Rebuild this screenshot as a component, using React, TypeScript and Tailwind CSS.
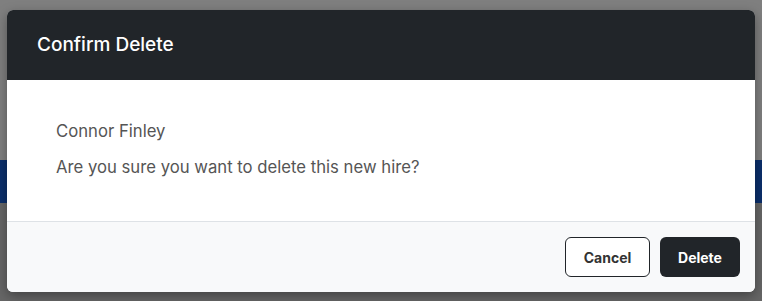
export default function App() {
  return (
    <div className="relative h-[301px] w-full overflow-hidden" style={{ fontFamily: "Inter, 'Noto Sans', sans-serif" }}>
      {/* dimmed page behind the modal */}
      <div className="flex h-full flex-col">
        <div className="h-[160px] bg-[#7f7f7f]" />
        <div className="h-[43px] bg-[#0b2f6b]" />
        <div className="flex-1 bg-[#666666]" />
      </div>

      <div className="absolute left-[7px] top-[10px] flex w-[748px] flex-col overflow-hidden rounded-md bg-white shadow-[0_4px_12px_rgba(0,0,0,0.35)]">
        <div className="flex h-[70px] items-center bg-[#212529] px-[30px]">
          <h2 className="text-[19px] font-medium text-white">Confirm Delete</h2>
        </div>
        <div className="flex h-[141px] flex-col gap-[11px] px-[49px] pt-[39px] text-[16.7px] text-[#555555]">
          <p>Connor Finley</p>
          <p>Are you sure you want to delete this new hire?</p>
        </div>
        <div className="flex h-[71px] items-center justify-end gap-[10px] border-t border-[#dee2e6] bg-[#f8f9fa] px-[15px]">
          <button className="h-[40px] w-[85px] rounded-md border border-[#212529] bg-white text-[14px] font-bold text-[#333333]">
            Cancel
          </button>
          <button className="h-[40px] w-[80px] rounded-md bg-[#212529] text-[14px] font-bold text-white">
            Delete
          </button>
        </div>
      </div>
    </div>
  );
}
